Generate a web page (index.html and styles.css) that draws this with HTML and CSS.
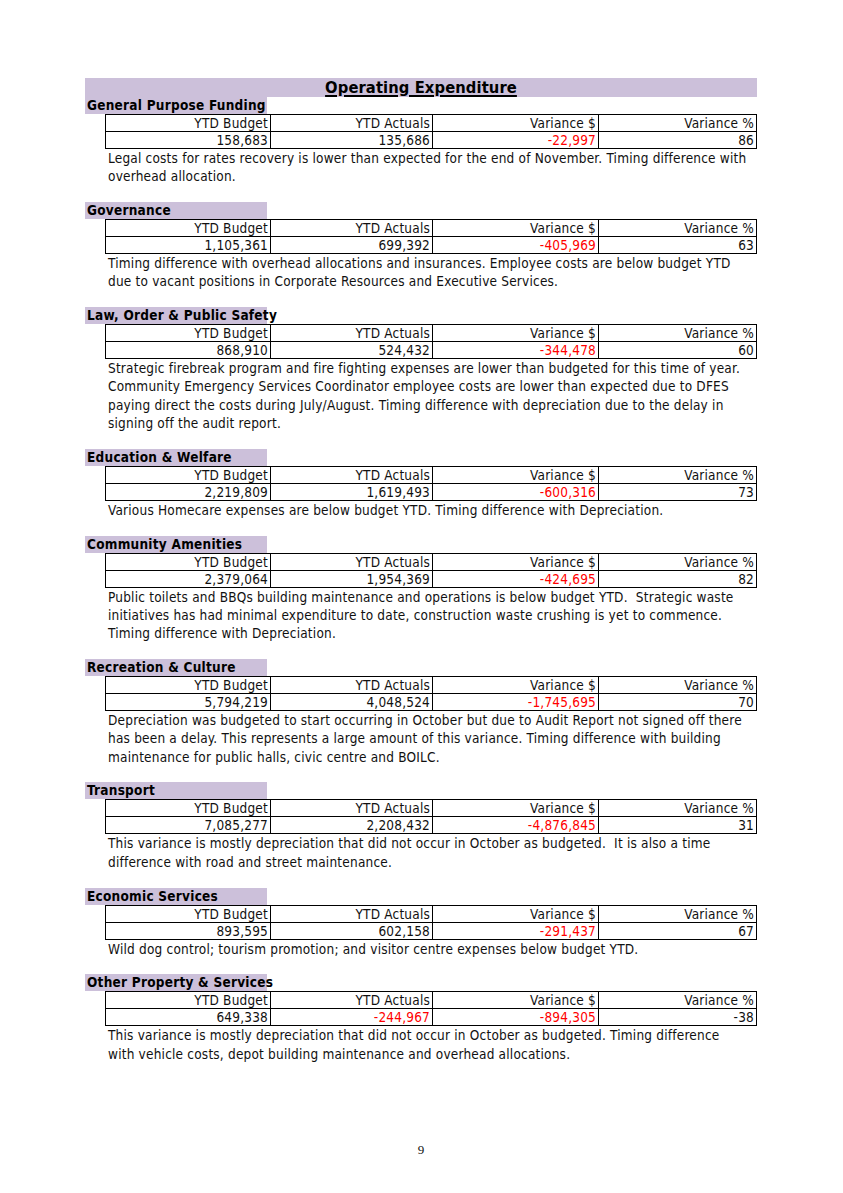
FILE: index.html
```html
<!DOCTYPE html>
<html lang="en">
<head>
<meta charset="utf-8">
<title>Operating Expenditure</title>
<link rel="stylesheet" href="styles.css">
</head>
<body>
<main class="page">
  <h1 class="title"><span>Operating Expenditure</span></h1>

  <section class="sec">
    <h2 class="sec-head">General Purpose Funding</h2>
    <table class="fig">
      <tr><td>YTD Budget</td><td>YTD Actuals</td><td>Variance $</td><td>Variance %</td></tr>
      <tr><td>158,683</td><td>135,686</td><td class="neg">-22,997</td><td>86</td></tr>
    </table>
    <p class="note">Legal costs for rates recovery is lower than expected for the end of November. Timing difference with<br>overhead allocation.</p>
  </section>

  <section class="sec">
    <h2 class="sec-head">Governance</h2>
    <table class="fig">
      <tr><td>YTD Budget</td><td>YTD Actuals</td><td>Variance $</td><td>Variance %</td></tr>
      <tr><td>1,105,361</td><td>699,392</td><td class="neg">-405,969</td><td>63</td></tr>
    </table>
    <p class="note">Timing difference with overhead allocations and insurances. Employee costs are below budget YTD<br>due to vacant positions in Corporate Resources and Executive Services.</p>
  </section>

  <section class="sec">
    <h2 class="sec-head">Law, Order &amp; Public Safety</h2>
    <table class="fig">
      <tr><td>YTD Budget</td><td>YTD Actuals</td><td>Variance $</td><td>Variance %</td></tr>
      <tr><td>868,910</td><td>524,432</td><td class="neg">-344,478</td><td>60</td></tr>
    </table>
    <p class="note">Strategic firebreak program and fire fighting expenses are lower than budgeted for this time of year.<br>Community Emergency Services Coordinator employee costs are lower than expected due to DFES<br>paying direct the costs during July/August. Timing difference with depreciation due to the delay in<br>signing off the audit report.</p>
  </section>

  <section class="sec">
    <h2 class="sec-head">Education &amp; Welfare</h2>
    <table class="fig">
      <tr><td>YTD Budget</td><td>YTD Actuals</td><td>Variance $</td><td>Variance %</td></tr>
      <tr><td>2,219,809</td><td>1,619,493</td><td class="neg">-600,316</td><td>73</td></tr>
    </table>
    <p class="note">Various Homecare expenses are below budget YTD. Timing difference with Depreciation.</p>
  </section>

  <section class="sec">
    <h2 class="sec-head">Community Amenities</h2>
    <table class="fig">
      <tr><td>YTD Budget</td><td>YTD Actuals</td><td>Variance $</td><td>Variance %</td></tr>
      <tr><td>2,379,064</td><td>1,954,369</td><td class="neg">-424,695</td><td>82</td></tr>
    </table>
    <p class="note">Public toilets and BBQs building maintenance and operations is below budget YTD.&nbsp; Strategic waste<br>initiatives has had minimal expenditure to date, construction waste crushing is yet to commence.<br>Timing difference with Depreciation.</p>
  </section>

  <section class="sec">
    <h2 class="sec-head">Recreation &amp; Culture</h2>
    <table class="fig">
      <tr><td>YTD Budget</td><td>YTD Actuals</td><td>Variance $</td><td>Variance %</td></tr>
      <tr><td>5,794,219</td><td>4,048,524</td><td class="neg">-1,745,695</td><td>70</td></tr>
    </table>
    <p class="note">Depreciation was budgeted to start occurring in October but due to Audit Report not signed off there<br>has been a delay. This represents a large amount of this variance. Timing difference with building<br>maintenance for public halls, civic centre and BOILC.</p>
  </section>

  <section class="sec">
    <h2 class="sec-head">Transport</h2>
    <table class="fig">
      <tr><td>YTD Budget</td><td>YTD Actuals</td><td>Variance $</td><td>Variance %</td></tr>
      <tr><td>7,085,277</td><td>2,208,432</td><td class="neg">-4,876,845</td><td>31</td></tr>
    </table>
    <p class="note">This variance is mostly depreciation that did not occur in October as budgeted.&nbsp; It is also a time<br>difference with road and street maintenance.</p>
  </section>

  <section class="sec">
    <h2 class="sec-head">Economic Services</h2>
    <table class="fig">
      <tr><td>YTD Budget</td><td>YTD Actuals</td><td>Variance $</td><td>Variance %</td></tr>
      <tr><td>893,595</td><td>602,158</td><td class="neg">-291,437</td><td>67</td></tr>
    </table>
    <p class="note">Wild dog control; tourism promotion; and visitor centre expenses below budget YTD.</p>
  </section>

  <section class="sec">
    <h2 class="sec-head">Other Property &amp; Services</h2>
    <table class="fig">
      <tr><td>YTD Budget</td><td>YTD Actuals</td><td>Variance $</td><td>Variance %</td></tr>
      <tr><td>649,338</td><td class="neg">-244,967</td><td class="neg">-894,305</td><td>-38</td></tr>
    </table>
    <p class="note">This variance is mostly depreciation that did not occur in October as budgeted. Timing difference<br>with vehicle costs, depot building maintenance and overhead allocations.</p>
  </section>

  <footer class="pnum">9</footer>
</main>
</body>
</html>
```

FILE: styles.css
```css
html, body {
  margin: 0;
  padding: 0;
  background: #ffffff;
}

.page {
  width: 672px;
  margin-left: 85px;
  padding-top: 78px;
  font-family: "DejaVu Sans Condensed", "DejaVu Sans", sans-serif;
  font-size: 13.5px;
  letter-spacing: 0.2px;
  color: #111;
}

.title {
  margin: 0;
  height: 19px;
  background: #ccc0da;
  text-align: center;
  font-size: 16.4px;
  font-weight: bold;
  line-height: 19px;
  letter-spacing: 0.1px;
  color: #000;
}

.title span {
  text-decoration: underline;
  text-decoration-thickness: 2px;
  text-underline-offset: 2px;
}

.sec {
  margin-bottom: 16.5px;
}

.sec-head {
  margin: 0;
  width: 182px;
  height: 17px;
  line-height: 17px;
  background: #ccc0da;
  font-size: 13.5px;
  font-weight: bold;
  letter-spacing: 0.25px;
  color: #000;
  padding-left: 2px;
  box-sizing: border-box;
  white-space: nowrap;
  overflow: visible;
}

.fig {
  margin-left: 20px;
  width: 652px;
  border-collapse: collapse;
  table-layout: fixed;
  border: 1px solid #000;
}

.fig td {
  height: 16px;
  padding: 0 2px 0 0;
  border: 1px solid #000;
  text-align: right;
  line-height: 16px;
  font-size: 13.5px;
  color: #111;
  white-space: nowrap;
}

.fig td:nth-child(1) { width: 162px; }
.fig td:nth-child(2) { width: 159px; }
.fig td:nth-child(3) { width: 163px; }

.fig td.neg {
  color: #ff0000;
}

.note {
  margin: 0 0 0 23px;
  line-height: 18.3px;
  white-space: nowrap;
}

.pnum {
  margin-top: 79px;
  text-align: center;
  font-family: "Liberation Serif", serif;
  font-size: 13px;
  letter-spacing: 0;
  color: #111;
}
```
